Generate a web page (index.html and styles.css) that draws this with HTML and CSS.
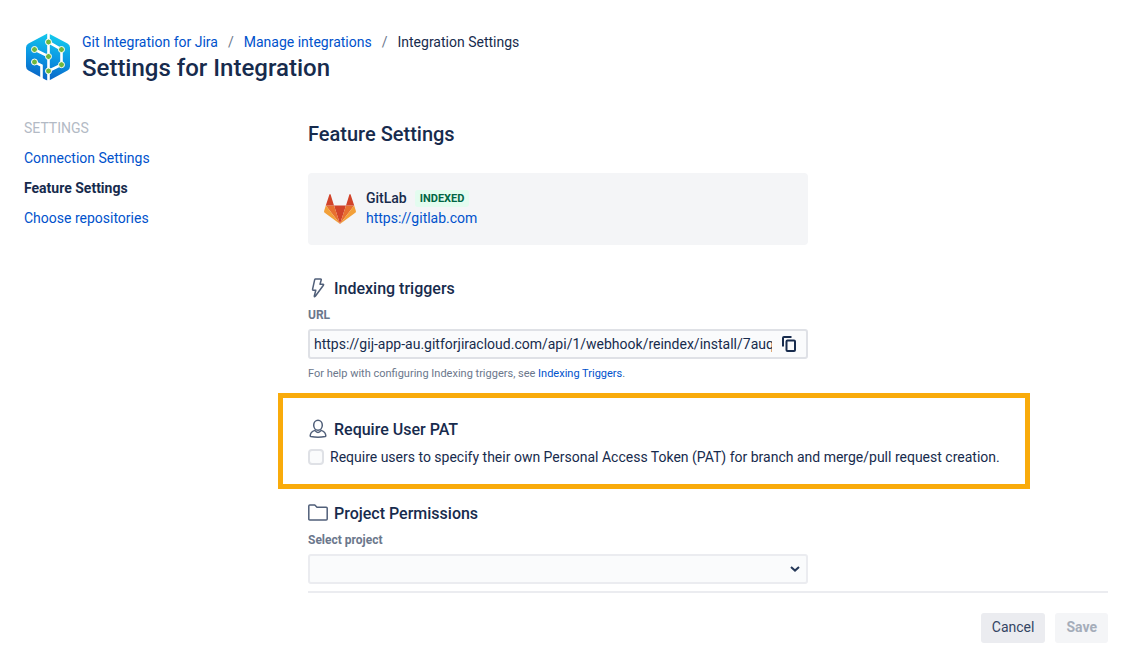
FILE: index.html
```html
<!DOCTYPE html>
<html lang="en">
<head>
<meta charset="utf-8">
<meta name="viewport" content="width=device-width, initial-scale=1">
<title>Settings for Integration</title>
<link rel="stylesheet" href="styles.css">
</head>
<body>
<header class="page-header">
  <svg class="logo" viewBox="0 0 44 48" aria-hidden="true">
    <defs>
      <linearGradient id="hex" x1=".6" y1="0" x2=".4" y2="1">
        <stop offset="0" stop-color="#14cbec"/>
        <stop offset=".5" stop-color="#0b98e4"/>
        <stop offset="1" stop-color="#0a62c4"/>
      </linearGradient>
    </defs>
    <path d="M19.500 1.400Q22-.4 24.500 1.400L41.500 10.500Q44 12 44 14.500V33.500Q44 36 41.500 37.500L24.500 46.800Q22 48.400 19.500 46.800L2.500 37.500Q0 36 0 33.500V14.500Q0 12 2.500 10.500Z" fill="url(#hex)"/>
    <path d="M22.500 0V23.500L8.500 16.500M22.500 9L35.500 16.500V31.700L22.500 38M22.500 23.500V48M8.500 29L15.500 32.500V46" fill="none" stroke="#fff" stroke-width="2.600"/>
    <g fill="#6db83f" stroke="#fff" stroke-width="1">
      <circle cx="22.500" cy="9" r="3"/><circle cx="35.500" cy="16.500" r="3"/><circle cx="8.500" cy="16.500" r="3"/>
      <circle cx="22.500" cy="23.500" r="3"/><circle cx="8.500" cy="29" r="3"/><circle cx="35.500" cy="31.700" r="3"/><circle cx="22.500" cy="38" r="3"/>
    </g>
  </svg>
  <div>
    <nav aria-label="Breadcrumb">
      <ol class="breadcrumbs">
        <li><a href="#">Git Integration for Jira</a></li>
        <li><a href="#">Manage integrations</a></li>
        <li aria-current="page">Integration Settings</li>
      </ol>
    </nav>
    <h1 class="page-title">Settings for Integration</h1>
  </div>
</header>
<div class="layout">
  <nav class="sidebar" aria-label="Settings">
    <span class="sidebar-title">SETTINGS</span>
    <a href="#">Connection Settings</a>
    <a class="active" href="#" aria-current="page">Feature Settings</a>
    <a href="#">Choose repositories</a>
  </nav>
  <main class="content">
    <h2 class="content-title">Feature Settings</h2>
    <div class="host-card">
      <svg class="host-logo" viewBox="0 0 32 30" aria-hidden="true">
        <path d="M16 30L10 11.500H22Z" fill="#d1432a"/>
        <path d="M16 30L10 11.500H1.800ZM16 30L22 11.500H30.200Z" fill="#e8702f"/>
        <path d="M1.800 11.500L.1 17Q-.2 18 .7 18.800L16 30ZM30.200 11.500L31.900 17Q32.200 18 31.300 18.800L16 30Z" fill="#f2a039"/>
        <path d="M1.800 11.500H10L6.600.6Q6 -.4 5.400.6ZM30.200 11.500H22L25.400.6Q26-.4 26.600.6Z" fill="#d1432a"/>
      </svg>
      <div>
        <div class="host-name">GitLab <span class="badge">INDEXED</span></div>
        <a href="#">https://gitlab.com</a>
      </div>
    </div>

    <section class="section">
      <h3 class="section-title">
        <svg class="icon" viewBox="0 1 20 20" aria-hidden="true"><path d="M7.500 1H12.500Q13.500 1 13.200 2L12 6.200H15Q16 6.200 15.400 7.200L7.300 18.300Q6.200 19.300 6.300 18L7.800 12.200H5.200Q4.300 12.200 4.600 11.200L6.700 1.700Q6.900 1 7.500 1Z"/></svg>
        Indexing triggers
      </h3>
      <label class="field-label" for="url">URL</label>
      <div class="copy-field">
        <input id="url" type="text" readonly value="https://gij-app-au.gitforjiracloud.com/api/1/webhook/reindex/install/7auqk2">
        <button class="copy" type="button" aria-label="Copy URL">
          <svg viewBox="0 0 14 16" aria-hidden="true"><path d="M1 10.500V2Q1 1 2 1H9.500"/><rect x="4.500" y="4.500" width="8.500" height="10.500" rx="1"/></svg>
        </button>
      </div>
      <p class="help">For help with configuring Indexing triggers, see <a href="#">Indexing Triggers</a>.</p>
    </section>

    <section class="highlight">
      <h3 class="section-title">
        <svg class="icon" viewBox="0 1 20 20" aria-hidden="true"><ellipse cx="10" cy="6.200" rx="4.300" ry="5"/><path d="M6.800 11.400C4 12.200 2.400 14 2.200 16.800Q2.200 17.300 2.800 17.500Q10 19 17.200 17.500Q17.800 17.300 17.800 16.800C17.600 14 16 12.200 13.200 11.400Q10 15.500 6.800 11.400Z"/></svg>
        Require User PAT
      </h3>
      <label class="check"><input type="checkbox">Require users to specify their own Personal Access Token (PAT) for branch and merge/pull request creation.</label>
    </section>

    <section class="permissions">
      <h3 class="section-title">
        <svg class="icon" viewBox="0 1 20 20" aria-hidden="true"><path d="M.8 16V3Q.8 2 1.800 2H6.800L9 4.300H18.200Q19.200 4.300 19.200 5.300V16Q19.200 17 18.200 17H1.800Q.8 17 .8 16Z"/></svg>
        Project Permissions
      </h3>
      <label class="field-label" for="project">Select project</label>
      <div class="select-field">
        <select id="project"><option value=""></option></select>
        <svg class="chevron" viewBox="0 0 10 6" aria-hidden="true"><path d="M1 1L5 4.600L9 1"/></svg>
      </div>
    </section>

    <footer class="actions">
      <button class="btn" type="button">Cancel</button>
      <button class="btn save" type="button" disabled>Save</button>
    </footer>
  </main>
</div>
</body>
</html>
```
FILE: styles.css
```css
* { box-sizing: border-box; }
body {
  margin: 0;
  padding: 32px 18px 15px 24px;
  background: #fff;
  color: #172b4d;
  font: 14px/20px Roboto, sans-serif;
}
h1, h2, h3, p, ol { margin: 0; padding: 0; }
a { color: #0052cc; text-decoration: none; }
a:hover { text-decoration: underline; }
input, select, button { font: inherit; color: inherit; margin: 0; }

.page-header { display: flex; gap: 12px; padding-left: 2px; }
.logo { width: 44px; height: 48px; margin-top: 1px; }
.breadcrumbs { display: flex; list-style: none; }
.breadcrumbs li + li::before { content: "/"; padding: 0 10px; color: #6b778c; }
.page-title { margin-top: 2px; font-size: 24px; line-height: 28px; font-weight: 500; }

.layout { display: grid; grid-template-columns: 284px minmax(0, 1fr); margin-top: 36px; }
.sidebar { display: flex; flex-direction: column; align-items: flex-start; gap: 10px; }
.sidebar-title { color: #b3bac5; }
.sidebar .active { color: #172b4d; font-weight: 700; }

.content { padding-top: 4px; }
.content-title { font-size: 20px; line-height: 24px; font-weight: 500; }
.host-card {
  display: flex;
  gap: 10px;
  max-width: 500px;
  margin-top: 27px;
  padding: 15px 16px 17px;
  border-radius: 4px;
  background: #f4f5f7;
}
.host-logo { width: 32px; height: 30px; margin-top: 6px; }
.host-name { display: flex; align-items: center; gap: 8px; font-weight: 500; }
.badge {
  padding: 1px 5px 0;
  border-radius: 3px;
  background: #e3fcef;
  color: #006644;
  font-size: 11px;
  line-height: 16px;
  font-weight: 700;
}

.section { max-width: 500px; margin-top: 34px; }
.section-title {
  display: flex;
  align-items: center;
  gap: 6px;
  font-size: 16px;
  line-height: 20px;
  font-weight: 500;
}
.icon { width: 20px; height: 20px; overflow: visible; fill: none; stroke: #505f79; stroke-width: 1.5; stroke-linejoin: round; }
.field-label {
  display: block;
  margin: 8px 0 6px;
  color: #6b778c;
  font-size: 12px;
  line-height: 16px;
  font-weight: 700;
}
.copy-field {
  display: flex;
  height: 30px;
  border: 2px solid #dfe1e6;
  border-radius: 3px;
  background: #fafbfc;
}
.copy-field input { flex: 1; min-width: 0; padding: 0 0 0 4px; border: 0; background: transparent; outline: 0; }
.copy { display: flex; align-items: center; justify-content: center; width: 34px; padding: 0; border: 0; background: transparent; }
.copy svg { width: 14px; height: 16px; fill: none; stroke: #172b4d; stroke-width: 2; }
.help { margin-top: 7px; color: #6b778c; font-size: 11px; line-height: 16px; }

.highlight {
  max-width: 752px;
  margin: 11px 0 0 -30px;
  padding: 22px 25px 17px;
  border: 5px solid #f9ab0b;
}
.check { display: flex; align-items: center; gap: 6px; margin-top: 7px; }
.check input { appearance: none; width: 16px; height: 16px; border: 2px solid #dfe1e6; border-radius: 4px; background: #fafbfc; }
.check input:checked { background: #0052cc; }

.permissions { margin-top: 15px; }
.select-field { position: relative; max-width: 500px; }
.select-field select {
  appearance: none;
  display: block;
  width: 100%;
  height: 30px;
  padding: 0 24px 0 6px;
  border: 2px solid #ebecf0;
  border-radius: 3px;
  background: #fafbfc;
}
.chevron {
  position: absolute;
  top: 12px;
  right: 8px;
  width: 10px;
  height: 6px;
  fill: none;
  stroke: #253858;
  stroke-width: 2;
  pointer-events: none;
}
.actions {
  display: flex;
  justify-content: flex-end;
  gap: 10px;
  margin-top: 7px;
  padding-top: 20px;
  border-top: 2px solid #ebecf0;
}
.btn { height: 30px; padding: 0 11px 2px; border: 0; border-radius: 3px; background: #ebecf0; color: #344563; }
.save { background: #f4f5f7; color: #a5adba; font-weight: 700; }
```
